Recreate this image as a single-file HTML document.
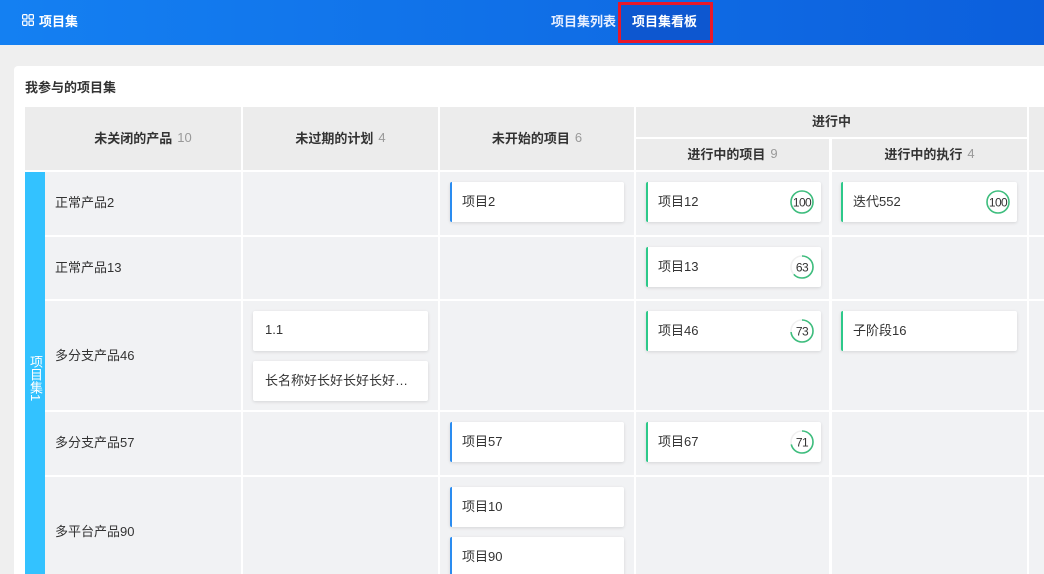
<!DOCTYPE html>
<html><head><meta charset="utf-8"><style>
*{margin:0;padding:0;box-sizing:border-box}
html,body{width:1044px;height:574px;overflow:hidden}
body{background:#efefef;font-family:"Liberation Sans","Noto Sans CJK SC",sans-serif;font-size:13px;color:#333;position:relative}
.hd{position:absolute;left:0;top:0;width:1044px;height:45px;background:linear-gradient(90deg,#1480f2,#0c5fdc)}
.abs{position:absolute}
.card{position:absolute;left:14px;top:66px;width:1040px;height:520px;background:#fff;border-radius:4px}
.c{position:absolute;background:#f1f2f4}
.h{position:absolute;background:#ececec;font-weight:bold;color:#333;display:flex;align-items:center;justify-content:center;font-size:13px;padding-bottom:3px}
.h span{color:#999;font-weight:normal;margin-left:5px}
.k{position:absolute;background:#fff;height:40px;box-shadow:0 1px 3px rgba(0,0,0,.12);border-radius:2px;display:flex;align-items:center;padding-left:10px;padding-bottom:3px;font-size:13px;color:#333}
.b{border-left:2px solid #2a8cf0}
.g{border-left:2px solid #2dc98a}
.lab{position:absolute;left:55px;font-size:13px;color:#333}
svg.p{position:absolute;right:7px;top:8px}
svg.p text{font-size:12px;letter-spacing:-0.6px}
.r1{top:172px;height:63px}.r2{top:237px;height:62px}.r3{top:301px;height:109px}.r4{top:412px;height:63px}.r5{top:477px;height:97px}
.x1{left:243px;width:195px}.x2{left:440px;width:194px}.x3{left:636px;width:193px}.x4{left:832px;width:195px}.x5{left:1029px;width:20px}
</style></head><body>
<div class="hd"></div>
<svg class="abs" style="left:22px;top:14px" width="12" height="12" viewBox="0 0 12 12" fill="none" stroke="#fff" stroke-width="1.2"><rect x="0.6" y="0.6" width="4.4" height="4.4" rx="1"/><rect x="7" y="0.6" width="4.4" height="4.4" rx="1"/><rect x="0.6" y="7" width="4.4" height="4.4" rx="1"/><rect x="7" y="7" width="4.4" height="4.4" rx="1"/></svg>
<div class="abs" style="left:39px;top:11px;color:#fff;font-size:13px;font-weight:bold">项目集</div>
<div class="abs" style="left:551px;top:11px;color:#e6eeff;font-size:13px;font-weight:bold">项目集列表</div>
<div class="abs" style="left:618px;top:2px;width:95px;height:41px;border:3px solid #e8182a;background:#0d57d0"></div>
<div class="abs" style="left:632px;top:11px;color:#fff;font-size:13px;font-weight:bold">项目集看板</div>

<div class="card"></div>
<div class="abs" style="left:25px;top:77px;font-weight:bold;font-size:13px">我参与的项目集</div>

<div class="h" style="left:25px;top:107px;width:216px;height:63px;padding-left:20px">未关闭的产品<span>10</span></div>
<div class="h" style="left:243px;top:107px;width:195px;height:63px">未过期的计划<span>4</span></div>
<div class="h" style="left:440px;top:107px;width:194px;height:63px">未开始的项目<span>6</span></div>
<div class="h" style="left:636px;top:107px;width:391px;height:30px">进行中</div>
<div class="h" style="left:636px;top:139px;width:193px;height:31px">进行中的项目<span>9</span></div>
<div class="h" style="left:832px;top:139px;width:195px;height:31px">进行中的执行<span>4</span></div>
<div class="h" style="left:1029px;top:107px;width:20px;height:63px"></div>

<div class="c" style="left:45px;top:172px;width:196px;height:63px"></div>
<div class="c" style="left:45px;top:237px;width:196px;height:62px"></div>
<div class="c" style="left:45px;top:301px;width:196px;height:109px"></div>
<div class="c" style="left:45px;top:412px;width:196px;height:63px"></div>
<div class="c" style="left:45px;top:477px;width:196px;height:97px"></div>
<div class="c r1 x1"></div><div class="c r1 x2"></div><div class="c r1 x3"></div><div class="c r1 x4"></div><div class="c r1 x5"></div>
<div class="c r2 x1"></div><div class="c r2 x2"></div><div class="c r2 x3"></div><div class="c r2 x4"></div><div class="c r2 x5"></div>
<div class="c r3 x1"></div><div class="c r3 x2"></div><div class="c r3 x3"></div><div class="c r3 x4"></div><div class="c r3 x5"></div>
<div class="c r4 x1"></div><div class="c r4 x2"></div><div class="c r4 x3"></div><div class="c r4 x4"></div><div class="c r4 x5"></div>
<div class="c r5 x1"></div><div class="c r5 x2"></div><div class="c r5 x3"></div><div class="c r5 x4"></div><div class="c r5 x5"></div>

<div class="abs" style="left:25px;top:172px;width:20px;height:402px;background:#33c2ff"></div>
<div class="abs" style="left:25px;top:355px;width:20px;color:#fff;font-size:13px;writing-mode:vertical-rl;display:flex;align-items:center;line-height:20px">项目集1</div>

<div class="lab" style="top:192px">正常产品2</div>
<div class="lab" style="top:257px">正常产品13</div>
<div class="lab" style="top:345px">多分支产品46</div>
<div class="lab" style="top:432px">多分支产品57</div>
<div class="lab" style="top:521px">多平台产品90</div>

<div class="k" style="left:253px;top:311px;width:175px;padding-left:12px">1.1</div>
<div class="k" style="left:253px;top:361px;width:175px;padding-left:12px">长名称好长好长好长好…</div>

<div class="k b" style="left:450px;top:182px;width:174px">项目2</div>
<div class="k b" style="left:450px;top:422px;width:174px">项目57</div>
<div class="k b" style="left:450px;top:487px;width:174px">项目10</div>
<div class="k b" style="left:450px;top:537px;width:174px">项目90</div>

<div class="k g" style="left:646px;top:182px;width:175px">项目12<svg class="p" width="24" height="24" viewBox="0 0 24 24"><circle cx="12" cy="12" r="11" fill="none" stroke="#f0f0f0" stroke-width="1.6"/><circle cx="12" cy="12" r="11" fill="none" stroke="#3dbd7d" stroke-width="1.6" stroke-dasharray="69.1 69.1" transform="rotate(-90 12 12)"/><text x="12" y="16.5" text-anchor="middle" fill="#333" font-family="Liberation Sans">100</text></svg></div>
<div class="k g" style="left:646px;top:247px;width:175px">项目13<svg class="p" width="24" height="24" viewBox="0 0 24 24"><circle cx="12" cy="12" r="11" fill="none" stroke="#f0f0f0" stroke-width="1.6"/><circle cx="12" cy="12" r="11" fill="none" stroke="#3dbd7d" stroke-width="1.6" stroke-dasharray="43.5 69.1" transform="rotate(-90 12 12)"/><text x="12" y="16.5" text-anchor="middle" fill="#333" font-family="Liberation Sans">63</text></svg></div>
<div class="k g" style="left:646px;top:311px;width:175px">项目46<svg class="p" width="24" height="24" viewBox="0 0 24 24"><circle cx="12" cy="12" r="11" fill="none" stroke="#f0f0f0" stroke-width="1.6"/><circle cx="12" cy="12" r="11" fill="none" stroke="#3dbd7d" stroke-width="1.6" stroke-dasharray="50.4 69.1" transform="rotate(-90 12 12)"/><text x="12" y="16.5" text-anchor="middle" fill="#333" font-family="Liberation Sans">73</text></svg></div>
<div class="k g" style="left:646px;top:422px;width:175px">项目67<svg class="p" width="24" height="24" viewBox="0 0 24 24"><circle cx="12" cy="12" r="11" fill="none" stroke="#f0f0f0" stroke-width="1.6"/><circle cx="12" cy="12" r="11" fill="none" stroke="#3dbd7d" stroke-width="1.6" stroke-dasharray="49 69.1" transform="rotate(-90 12 12)"/><text x="12" y="16.5" text-anchor="middle" fill="#333" font-family="Liberation Sans">71</text></svg></div>

<div class="k g" style="left:841px;top:182px;width:176px">迭代552<svg class="p" width="24" height="24" viewBox="0 0 24 24"><circle cx="12" cy="12" r="11" fill="none" stroke="#3dbd7d" stroke-width="1.6"/><text x="12" y="16.5" text-anchor="middle" fill="#333" font-family="Liberation Sans">100</text></svg></div>
<div class="k g" style="left:841px;top:311px;width:176px">子阶段16</div>
</body></html>
